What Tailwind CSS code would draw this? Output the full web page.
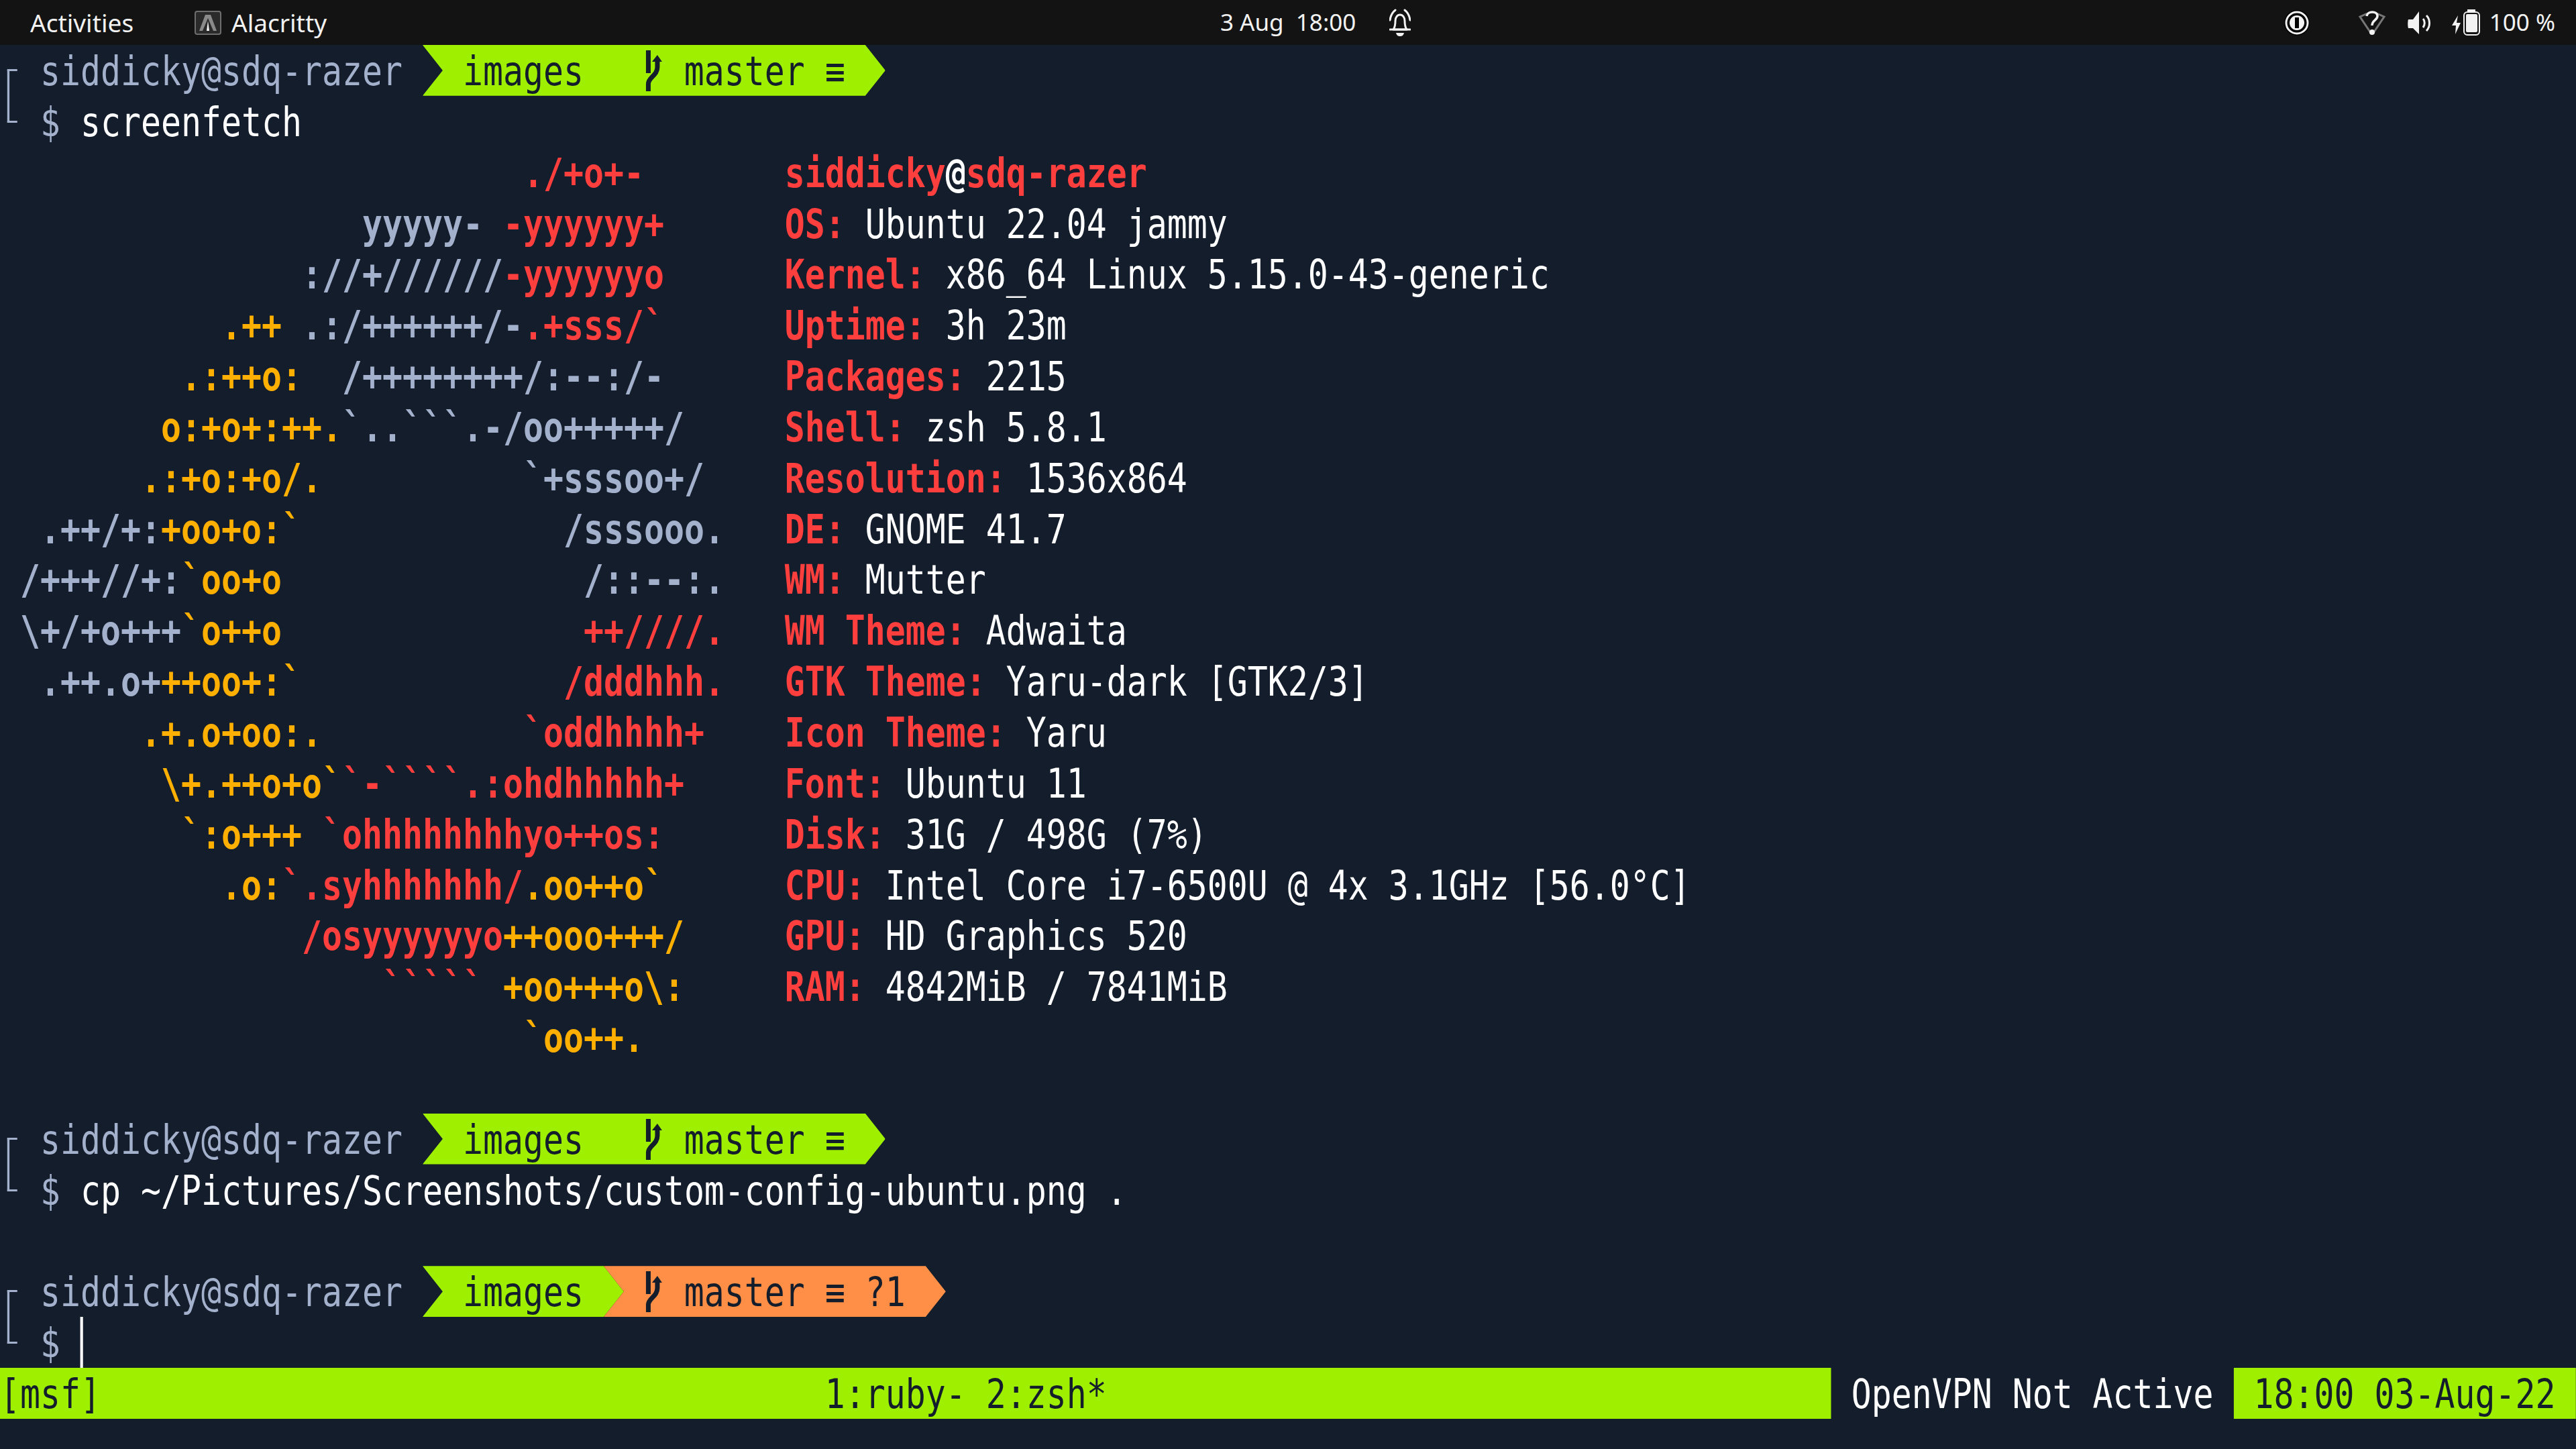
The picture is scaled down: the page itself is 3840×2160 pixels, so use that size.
<!DOCTYPE html>
<html lang="en">
<head>
    <meta charset="UTF-8">
    <title>Alacritty</title>
    <script src="https://cdn.jsdelivr.net/npm/@tailwindcss/browser@4"></script>
</head>
<body class="bg-[#141d2b] w-[3840px] h-[2160px] overflow-hidden">
    <!-- GNOME top bar -->
    <div class="flex items-center h-[67px] bg-[#131313] text-[#f2f2f2] text-[35px] font-['Noto_Sans',sans-serif]">
        <div class="flex items-center w-[1819px] text-[37px]">
            <span class="ml-[45px] w-[245px]">Activities</span>
            <svg width="40" height="36" viewBox="0 0 40 36">
                <rect x="1" y="1" width="38" height="34" rx="3" fill="#2a2a2a" stroke="#6e6e6e" stroke-width="2"/>
                <path d="M16 6h8l9 24h-5l-8-19-8 19H7z" fill="#8a8a8a"/>
                <path d="M20 15l2 15h-4z" fill="#f4f4f4"/>
            </svg>
            <span class="ml-[15px]">Alacritty</span>
        </div>
        <span class="whitespace-pre">3 Aug  18:00</span>
        <svg class="ml-[50px]" width="32" height="42" viewBox="0 0 32 42" fill="none" stroke="#f2f2f2" stroke-width="3">
            <path d="M6 31c3-4 3-8 3-13 0-5 3-9 7-9s7 4 7 9c0 5 0 9 3 13z" stroke-linejoin="round"/>
            <path d="M1 31h30M1 17C2 10 5 5 9 2M31 17C30 10 27 5 23 2" stroke-linecap="round"/>
            <path d="M10 36h12c-1 4-3 5-6 5s-5-1-6-5z" fill="#f2f2f2" stroke="none"/>
        </svg>
        <div class="flex items-center ml-auto">
            <svg width="38" height="38" viewBox="0 0 38 38">
                <circle cx="19" cy="19" r="19" fill="#000"/>
                <circle cx="19" cy="19" r="16" fill="none" stroke="#f2f2f2" stroke-width="3"/>
                <circle cx="19" cy="19" r="11" fill="#f2f2f2"/>
                <rect x="16" y="11" width="6" height="16" fill="#000"/>
            </svg>
            <svg class="ml-[73px]" width="40" height="40" viewBox="0 0 40 40" fill="none">
                <path d="M13 6L2 11l16 24M27 6l11 5-16 24" stroke="#777" stroke-width="3"/>
                <path d="M12 10c1-8 16-8 16 0 0 6-8 6-8 14" stroke="#f2f2f2" stroke-width="3.5"/>
                <circle cx="20" cy="34" r="4" fill="#f2f2f2"/>
            </svg>
            <svg class="ml-[32px]" width="37" height="36" viewBox="0 0 37 36">
                <path d="M2 13h7L18 1v34L9 26H2c-1-3-1-10 0-13z" fill="#f2f2f2"/>
                <path d="M24 12c3 3 3 9 0 13M29 7c6 6 6 17 0 23" fill="none" stroke="#f2f2f2" stroke-width="3"/>
            </svg>
            <svg class="ml-[30px]" width="42" height="40" viewBox="0 0 42 40">
                <path d="M9 9L0 24h6L5 37l8-17H7z" fill="#f2f2f2"/>
                <rect x="18" y="4" width="23" height="34" rx="5" fill="none" stroke="#f2f2f2" stroke-width="2"/>
                <rect x="23" y="0" width="12" height="4" fill="#f2f2f2"/>
                <rect x="21" y="7" width="17" height="27" rx="2" fill="#f2f2f2"/>
            </svg>
            <span class="ml-[14px] mr-[31px]">100 %</span>
        </div>
    </div>

    <!-- terminal, laid out in character cells: 1ch is one cell -->
    <div class="w-[128ch] origin-top-left scale-x-[0.8304] text-[60px] leading-[75.85px] text-[#a4b1cd] font-['DejaVu_Sans_Mono',monospace]">
        <!-- prompt -->
        <div class="flex">
            <div class="w-[2ch]">
                <div class="ml-[0.35ch] mt-[36px] w-[0.5ch] h-[80px] border-l-[4px] border-y-[3px] border-[#a4b1cd]"></div>
            </div>
            <div>
                <div class="flex h-[75.85px]">
                    <span class="w-[19ch] whitespace-pre translate-y-[2px]">siddicky@sdq-razer</span>
                    <div class="flex w-[23ch] pl-[2ch] text-[#141d2b] bg-[#9fef00] [clip-path:polygon(0_0,22ch_0,23ch_50%,22ch_100%,0_100%,1ch_50%)]">
                        <span class="translate-y-[2px]">images</span>
                        <svg class="ml-[3ch] w-[1ch] h-[76px]" viewBox="0 0 30 76" preserveAspectRatio="none" fill="#141d2b">
                            <rect x="3" y="8" width="7" height="34"/>
                            <path d="M6.5 69V58C6.5 48 20 46 20 33V24" fill="none" stroke="#141d2b" stroke-width="7"/>
                            <path d="M12 25L20 15L27 25z"/>
                        </svg>
                        <span class="ml-[1ch] whitespace-pre translate-y-[2px]">master ≡</span>
                    </div>
                </div>
                <div class="whitespace-pre translate-y-[2px]">$ <span class="text-white">screenfetch</span></div>
            </div>
        </div>

        <!-- screenfetch -->
        <div class="flex translate-y-[2px]">
            <div class="w-[39ch] font-bold [&>div]:whitespace-pre">
                <div>                          <span class="text-[#ff3e3e]">./+o+-</span></div>
                <div>                  yyyyy-<span class="text-[#ff3e3e]"> -yyyyyy+</span></div>
                <div>               ://+//////<span class="text-[#ff3e3e]">-yyyyyyo</span></div>
                <div>           <span class="text-[#ffaf00]">.++</span> .:/++++++/-<span class="text-[#ff3e3e]">.+sss/`</span></div>
                <div>         <span class="text-[#ffaf00]">.:++o:</span>  /++++++++/:--:/-</div>
                <div>        <span class="text-[#ffaf00]">o:+o+:++.</span>`..```.-/oo+++++/</div>
                <div>       <span class="text-[#ffaf00]">.:+o:+o/.</span>          `+sssoo+/</div>
                <div>  .++/+:<span class="text-[#ffaf00]">+oo+o:`</span>             /sssooo.</div>
                <div> /+++//+:<span class="text-[#ffaf00]">`oo+o</span>               /::--:.</div>
                <div> \+/+o+++<span class="text-[#ffaf00]">`o++o</span>               <span class="text-[#ff3e3e]">++////.</span></div>
                <div>  .++.o+<span class="text-[#ffaf00]">++oo+:`</span>             <span class="text-[#ff3e3e]">/dddhhh.</span></div>
                <div>       <span class="text-[#ffaf00]">.+.o+oo:.</span>          <span class="text-[#ff3e3e]">`oddhhhh+</span></div>
                <div>        <span class="text-[#ffaf00]">\+.++o+o`</span><span class="text-[#ff3e3e]">`-````.:ohdhhhhh+</span></div>
                <div>         <span class="text-[#ffaf00]">`:o+++</span> <span class="text-[#ff3e3e]">`ohhhhhhhhyo++os:</span></div>
                <div>           <span class="text-[#ffaf00]">.o:</span><span class="text-[#ff3e3e]">`.syhhhhhhh/</span><span class="text-[#ffaf00]">.oo++o`</span></div>
                <div>               <span class="text-[#ff3e3e]">/osyyyyyyo</span><span class="text-[#ffaf00]">++ooo+++/</span></div>
                <div>                   <span class="text-[#ff3e3e]">`````</span> <span class="text-[#ffaf00]">+oo+++o\:</span></div>
                <div>                          <span class="text-[#ffaf00]">`oo++.</span></div>
            </div>
            <div class="text-white [&>div]:whitespace-pre">
                <div><b class="text-[#ff3e3e]">siddicky</b><b>@</b><b class="text-[#ff3e3e]">sdq-razer</b></div>
                <div><b class="text-[#ff3e3e]">OS:</b> Ubuntu 22.04 jammy</div>
                <div><b class="text-[#ff3e3e]">Kernel:</b> x86_64 Linux 5.15.0-43-generic</div>
                <div><b class="text-[#ff3e3e]">Uptime:</b> 3h 23m</div>
                <div><b class="text-[#ff3e3e]">Packages:</b> 2215</div>
                <div><b class="text-[#ff3e3e]">Shell:</b> zsh 5.8.1</div>
                <div><b class="text-[#ff3e3e]">Resolution:</b> 1536x864</div>
                <div><b class="text-[#ff3e3e]">DE:</b> GNOME 41.7</div>
                <div><b class="text-[#ff3e3e]">WM:</b> Mutter</div>
                <div><b class="text-[#ff3e3e]">WM Theme:</b> Adwaita</div>
                <div><b class="text-[#ff3e3e]">GTK Theme:</b> Yaru-dark [GTK2/3]</div>
                <div><b class="text-[#ff3e3e]">Icon Theme:</b> Yaru</div>
                <div><b class="text-[#ff3e3e]">Font:</b> Ubuntu 11</div>
                <div><b class="text-[#ff3e3e]">Disk:</b> 31G / 498G (7%)</div>
                <div><b class="text-[#ff3e3e]">CPU:</b> Intel Core i7-6500U @ 4x 3.1GHz [56.0°C]</div>
                <div><b class="text-[#ff3e3e]">GPU:</b> HD Graphics 520</div>
                <div><b class="text-[#ff3e3e]">RAM:</b> 4842MiB / 7841MiB</div>
            </div>
        </div>
        <div class="h-[75.85px]"></div>

        <!-- prompt -->
        <div class="flex">
            <div class="w-[2ch]">
                <div class="ml-[0.35ch] mt-[36px] w-[0.5ch] h-[80px] border-l-[4px] border-y-[3px] border-[#a4b1cd]"></div>
            </div>
            <div>
                <div class="flex h-[75.85px]">
                    <span class="w-[19ch] whitespace-pre translate-y-[2px]">siddicky@sdq-razer</span>
                    <div class="flex w-[23ch] pl-[2ch] text-[#141d2b] bg-[#9fef00] [clip-path:polygon(0_0,22ch_0,23ch_50%,22ch_100%,0_100%,1ch_50%)]">
                        <span class="translate-y-[2px]">images</span>
                        <svg class="ml-[3ch] w-[1ch] h-[76px]" viewBox="0 0 30 76" preserveAspectRatio="none" fill="#141d2b">
                            <rect x="3" y="8" width="7" height="34"/>
                            <path d="M6.5 69V58C6.5 48 20 46 20 33V24" fill="none" stroke="#141d2b" stroke-width="7"/>
                            <path d="M12 25L20 15L27 25z"/>
                        </svg>
                        <span class="ml-[1ch] whitespace-pre translate-y-[2px]">master ≡</span>
                    </div>
                </div>
                <div class="whitespace-pre translate-y-[2px]">$ <span class="text-white">cp ~/Pictures/Screenshots/custom-config-ubuntu.png .</span></div>
            </div>
        </div>
        <div class="h-[75.85px]"></div>

        <!-- prompt, dirty tree -->
        <div class="flex">
            <div class="w-[2ch]">
                <div class="ml-[0.35ch] mt-[36px] w-[0.5ch] h-[80px] border-l-[4px] border-y-[3px] border-[#a4b1cd]"></div>
            </div>
            <div>
                <div class="flex h-[75.85px]">
                    <span class="w-[19ch] whitespace-pre translate-y-[2px]">siddicky@sdq-razer</span>
                    <div class="w-[10ch] pl-[2ch] text-[#141d2b] bg-[#9fef00] [clip-path:polygon(0_0,9ch_0,10ch_50%,9ch_100%,0_100%,1ch_50%)]"><span class="inline-block translate-y-[2px]">images</span></div>
                    <div class="flex w-[17ch] -ml-[1ch] pl-[2ch] text-[#141d2b] bg-[#ff8f46] [clip-path:polygon(0_0,16ch_0,17ch_50%,16ch_100%,0_100%,1ch_50%)]">
                        <svg class="w-[1ch] h-[76px]" viewBox="0 0 30 76" preserveAspectRatio="none" fill="#141d2b">
                            <rect x="3" y="8" width="7" height="34"/>
                            <path d="M6.5 69V58C6.5 48 20 46 20 33V24" fill="none" stroke="#141d2b" stroke-width="7"/>
                            <path d="M12 25L20 15L27 25z"/>
                        </svg>
                        <span class="ml-[1ch] whitespace-pre translate-y-[2px]">master ≡ ?1</span>
                    </div>
                </div>
                <div class="flex h-[75.85px]">
                    <span class="w-[2ch] translate-y-[2px]">$</span>
                    <span class="w-[5px] h-[75.85px] bg-white"></span>
                </div>
            </div>
        </div>

        <!-- tmux status line -->
        <div class="flex h-[76px] whitespace-pre">
            <div class="w-[91ch] bg-[#9fef00] text-[#141d2b]"><div class="translate-y-[2px]">[msf]<span class="ml-[36ch]">1:ruby- 2:zsh*</span></div></div>
            <div class="w-[20ch] pl-[1ch] text-white"><div class="translate-y-[2px]">OpenVPN Not Active</div></div>
            <div class="w-[17ch] pl-[1ch] bg-[#9fef00] text-[#141d2b]"><div class="translate-y-[2px]">18:00 03-Aug-22</div></div>
        </div>
    </div>
</body>
</html>
